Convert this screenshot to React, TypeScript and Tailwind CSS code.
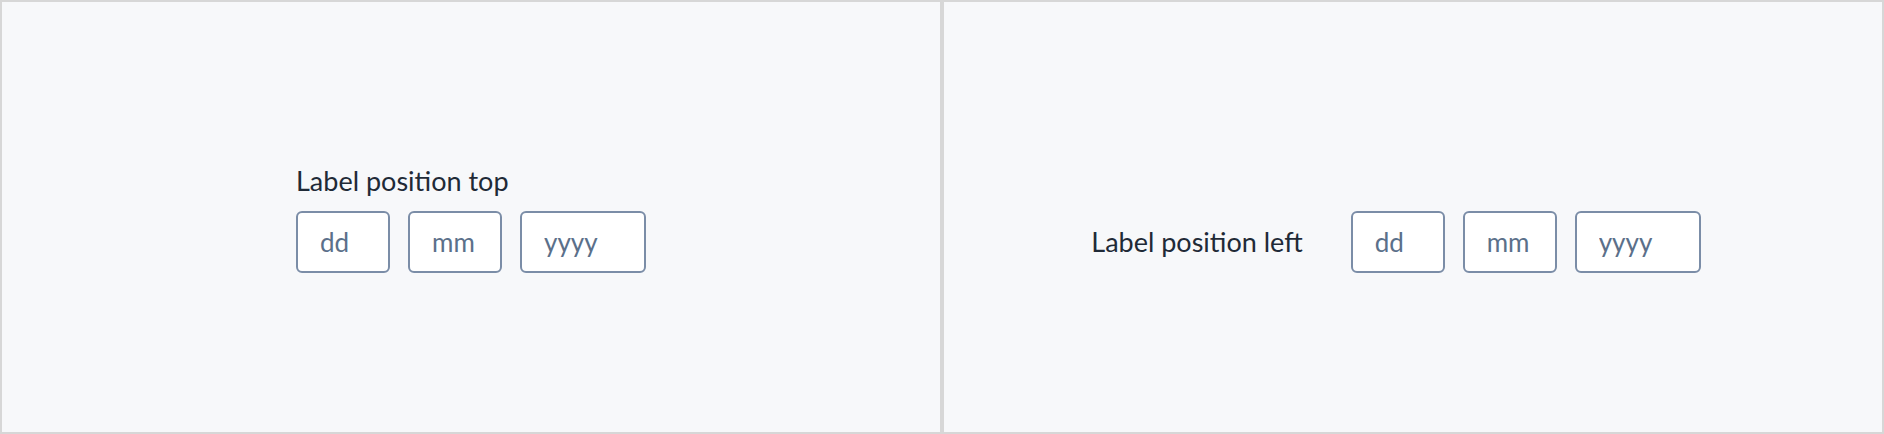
const parts = [
  { key: 'dd', width: 'w-[94px]' },
  { key: 'mm', width: 'w-[94px]' },
  { key: 'yyyy', width: 'w-[126px]' },
]

function DateInputs() {
  return (
    <div className="flex gap-[18px]">
      {parts.map((p) => (
        <input
          key={p.key}
          placeholder={p.key}
          className={[
            'h-[62px] rounded-[6px] border-2 border-[#7b8da7] bg-white pl-[22px] text-[26px] text-[#5b708a] outline-none placeholder:text-[#5b708a]',
            p.width,
          ].join(' ')}
        />
      ))}
    </div>
  )
}

export default function App() {
  return (
    <div
      className="flex h-[434px] w-[1884px] bg-white"
      style={{ fontFamily: 'Lato, "Noto Sans", sans-serif' }}
    >
      {/* Label on top */}
      <div className="flex flex-1 items-center justify-center border-2 border-[#d7d7d7] bg-[#f7f8fa]">
        <div className="flex flex-col">
          <label className="mb-[10px] text-[27px] leading-[40px] text-[#1f2a37]">
            Label position top
          </label>
          <DateInputs />
        </div>
      </div>

      {/* Label on the left, inputs kept on the same line as the other panel */}
      <div className="flex flex-1 items-center justify-center border-2 border-[#d7d7d7] bg-[#f7f8fa]">
        <div className="flex items-center pt-[50px] pr-[34px]">
          <label className="mr-[48px] text-[27px] leading-[40px] text-[#1f2a37]">
            Label position left
          </label>
          <DateInputs />
        </div>
      </div>
    </div>
  )
}
